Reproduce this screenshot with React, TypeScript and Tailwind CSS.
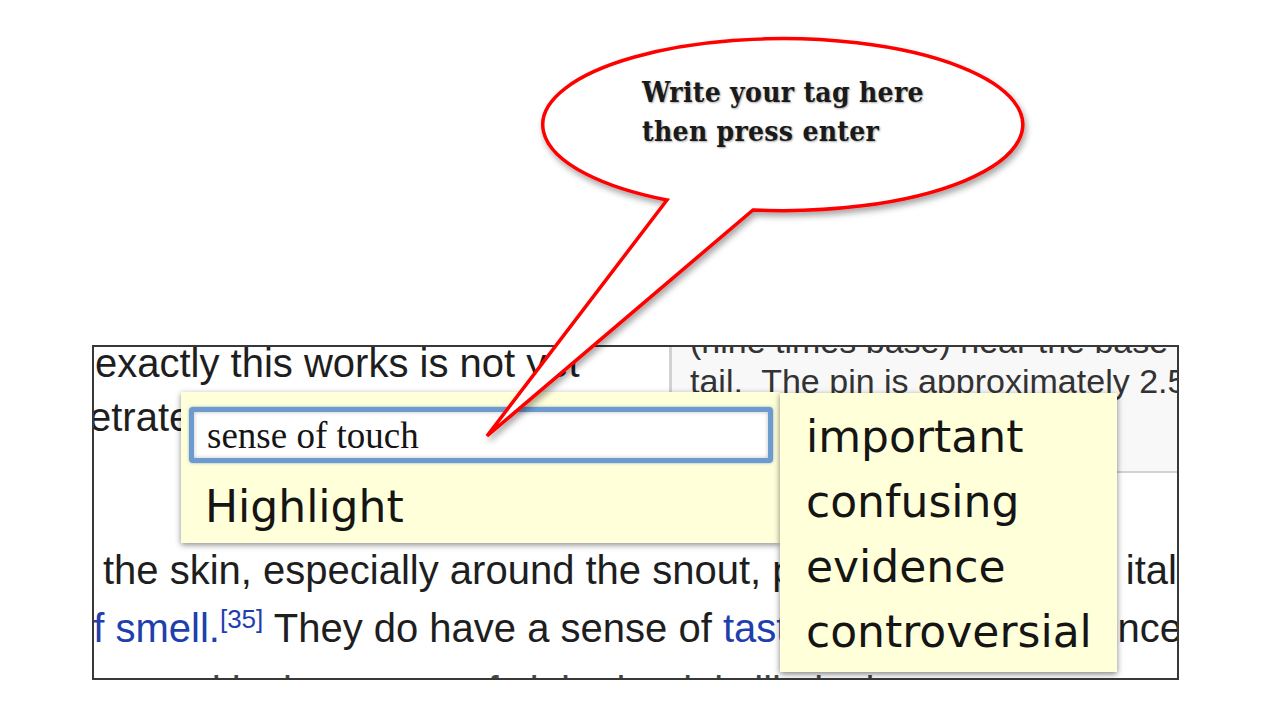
import React from 'react';

const tags = ['important', 'confusing', 'evidence', 'controversial'];

const SpeechBubble: React.FC = () => {
  return (
    <>
      <svg
        className="absolute inset-0 pointer-events-none"
        width="1273"
        height="717"
        viewBox="0 0 1273 717"
      >
        <defs>
          <filter id="bubble-shadow" x="-10%" y="-10%" width="130%" height="140%">
            <feDropShadow dx="2" dy="4" stdDeviation="3" floodColor="#000" floodOpacity="0.35" />
          </filter>
        </defs>
        <path
          d="M 667 200 L 487 436 L 753 210 A 240 86 0 1 0 667 200 Z"
          fill="#ffffff"
          stroke="#ff0000"
          strokeWidth="3.5"
          strokeLinejoin="miter"
          filter="url(#bubble-shadow)"
        />
      </svg>
      <div className="absolute left-[642px] top-[73px] text-[28px] leading-[39px] tracking-[0.3px] font-bold text-[#1a1a1a] font-['DejaVu_Serif_Condensed','DejaVu_Serif',serif] [font-stretch:condensed] [text-shadow:1px_1px_2px_rgba(0,0,0,0.35)]">
        <div>Write your tag here</div>
        <div>then press enter</div>
      </div>
    </>
  );
};

const TagPopup: React.FC = () => {
  return (
    <>
      {/* main tagging box */}
      <div className="absolute left-[87px] top-[45px] w-[599px] h-[151px] bg-[#ffffd9] shadow-[0_2px_6px_rgba(0,0,0,0.45)] pt-[15px] pl-[8px]">
        <div className="w-[584px] h-[56px] bg-white border-[5px] border-[#6c9bd0] rounded-[4px] shadow-[inset_0_0_4px_rgba(0,0,0,0.25),0_0_3px_rgba(70,120,190,0.6)] flex items-center pl-[13px]">
          <span className="text-[37px] text-[#151515] font-['Liberation_Serif','Times_New_Roman',serif] leading-none">
            sense of touch
          </span>
        </div>
        <div className="mt-[23px] pl-[16px] text-[44px] leading-[42px] text-[#151515] font-['DejaVu_Sans',Verdana,sans-serif]">
          Highlight
        </div>
      </div>

      {/* suggestion list */}
      <div className="absolute left-[686px] top-[46px] w-[337px] h-[279px] bg-[#ffffd9] shadow-[0_2px_6px_rgba(0,0,0,0.5)] pt-[11px] pl-[26px] text-[44px] leading-[65px] text-[#151515] font-['DejaVu_Sans',Verdana,sans-serif]">
        {tags.map((t) => (
          <div key={t}>{t}</div>
        ))}
      </div>
    </>
  );
};

const App: React.FC = () => {
  return (
    <div className="relative w-[1273px] h-[717px] bg-white overflow-hidden">
      <div className="pt-[345px] pl-[92px]">
        <div className="relative w-[1087px] h-[335px] border-2 border-[#383838] overflow-hidden bg-white text-[#1e1e1e] font-['Liberation_Sans',Arial,sans-serif] whitespace-nowrap">
          <div className="flex h-[126px]">
            <div className="w-[575px] shrink-0 overflow-hidden text-[40px] leading-[54px]">
              <div className="-mt-[11px] pl-[1px]">exactly this works is not yet</div>
              <div className="-ml-[5px]">etrate the skin</div>
            </div>
            <div className="flex-1 overflow-hidden bg-[#f8f8f8] border-l-[3px] border-b-2 border-[#d2d2d2] pl-[18px] text-[34px] leading-[40px] text-[#333]">
              <div className="-mt-[26px]">(nine times base) near the base of</div>
              <div>tail.&nbsp; The pin is approximately 2.5 cm</div>
            </div>
          </div>

          <div className="mt-[68px] text-[40px] leading-[58px]">
            <div className="flex justify-between">
              <span className="pl-[9px]">the skin, especially around the snout, possibly</span>
              <span>ital</span>
            </div>
            <div className="flex justify-between">
              <span className="-ml-[23px]">
                <span className="text-[#1f3fae]">of smell.</span>
                <span className="relative -top-[14px] text-[26px] text-[#1f3fae]">[35]</span>
                {' '}They do have a sense of <span className="text-[#1f3fae]">taste</span>
              </span>
              <span className="-mr-[5px]">nce</span>
            </div>
            <div className="pl-[60px] text-[#444]">and lack a sense of sight, but it is likely that</div>
          </div>

          <TagPopup />
        </div>
      </div>

      <SpeechBubble />
    </div>
  );
};

export default App;
